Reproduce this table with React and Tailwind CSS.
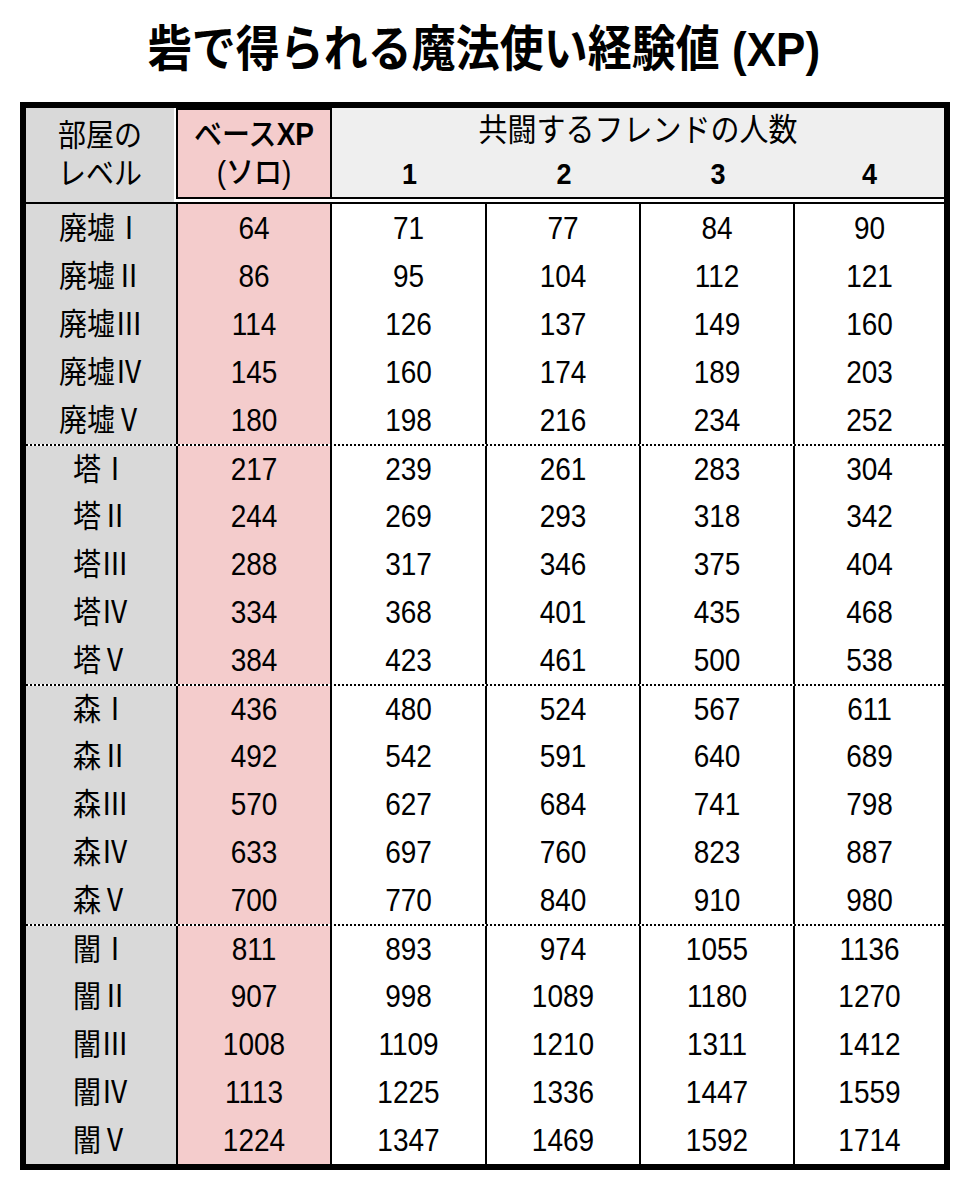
import React from 'react';

const font = "font-['Liberation_Sans','Noto_Sans_CJK_JP',sans-serif]";

const groups = [
    {
        place: '廃墟',
        rows: [
            ['Ⅰ', 64, 71, 77, 84, 90],
            ['Ⅱ', 86, 95, 104, 112, 121],
            ['Ⅲ', 114, 126, 137, 149, 160],
            ['Ⅳ', 145, 160, 174, 189, 203],
            ['Ⅴ', 180, 198, 216, 234, 252],
        ],
    },
    {
        place: '塔',
        rows: [
            ['Ⅰ', 217, 239, 261, 283, 304],
            ['Ⅱ', 244, 269, 293, 318, 342],
            ['Ⅲ', 288, 317, 346, 375, 404],
            ['Ⅳ', 334, 368, 401, 435, 468],
            ['Ⅴ', 384, 423, 461, 500, 538],
        ],
    },
    {
        place: '森',
        rows: [
            ['Ⅰ', 436, 480, 524, 567, 611],
            ['Ⅱ', 492, 542, 591, 640, 689],
            ['Ⅲ', 570, 627, 684, 741, 798],
            ['Ⅳ', 633, 697, 760, 823, 887],
            ['Ⅴ', 700, 770, 840, 910, 980],
        ],
    },
    {
        place: '闇',
        rows: [
            ['Ⅰ', 811, 893, 974, 1055, 1136],
            ['Ⅱ', 907, 998, 1089, 1180, 1270],
            ['Ⅲ', 1008, 1109, 1210, 1311, 1412],
            ['Ⅳ', 1113, 1225, 1336, 1447, 1559],
            ['Ⅴ', 1224, 1347, 1469, 1592, 1714],
        ],
    },
];

// the source image is a little taller than wide, so the glyphs get a light vertical stretch
const Tall = ({children}) => <span className="inline-block scale-y-110">{children}</span>;

const Row = ({place, row, dotted}) => {
    const [level, base, f1, f2, f3, f4] = row;
    return (
        <div className={`flex h-12 text-[28px] ${dotted ? 'border-t-2 border-dotted border-black' : ''}`}>
            <div className="w-[152px] bg-[#d9d9d9] border-r-2 border-black flex items-center justify-center pt-[2px]">
                <Tall>{place}{level}</Tall>
            </div>
            <div className="w-[154px] bg-[#f4cccc] border-r-2 border-black flex items-center justify-center pt-[2px]">
                <Tall>{base}</Tall>
            </div>
            <div className="w-[155px] border-r-2 border-black flex items-center justify-center pt-[2px]"><Tall>{f1}</Tall></div>
            <div className="w-[154px] border-r-2 border-black flex items-center justify-center pt-[2px]"><Tall>{f2}</Tall></div>
            <div className="w-[154px] border-r-2 border-black flex items-center justify-center pt-[2px]"><Tall>{f3}</Tall></div>
            <div className="flex-1 flex items-center justify-center pt-[2px]"><Tall>{f4}</Tall></div>
        </div>
    );
};

export default function App() {
    return (
        <div className={`w-[968px] h-[1190px] bg-white text-black ${font}`}>
            <div className="h-[102px] flex items-center justify-center">
                <h1 className="text-[44px] font-bold scale-y-110 pb-[2px]">砦で得られる魔法使い経験値 (XP)</h1>
            </div>

            <div className="ml-[20px] w-[930px] border-[6px] border-black">
                <div className="flex h-[96px]">
                    <div className="w-[148px] bg-[#d9d9d9] border-b-2 border-black flex flex-col items-center justify-center text-[28px] leading-[38px]">
                        <Tall>部屋の</Tall>
                        <Tall>レベル</Tall>
                    </div>
                    <div className="flex-1 flex flex-col bg-white border-b-2 border-black pl-[2px]">
                        <div className="flex flex-1 mb-[3px]">
                            <div className="w-[156px] bg-[#f4cccc] border-2 border-black flex flex-col items-center justify-center text-[28px] leading-[38px] font-medium">
                                <Tall>ベース<span className="font-semibold">XP</span></Tall>
                                <Tall>(ソロ)</Tall>
                            </div>
                            <div className="flex-1 flex flex-col bg-[#efefef] border-b-2 border-black">
                                <div className="h-[44px] flex items-end justify-center text-[29px]">
                                    <Tall>共闘するフレンドの人数</Tall>
                                </div>
                                <div className="flex-1 flex items-center text-[27px] font-bold">
                                    <div className="w-[155px] text-center"><Tall>1</Tall></div>
                                    <div className="w-[154px] text-center"><Tall>2</Tall></div>
                                    <div className="w-[154px] text-center"><Tall>3</Tall></div>
                                    <div className="flex-1 text-center"><Tall>4</Tall></div>
                                </div>
                            </div>
                        </div>
                    </div>
                </div>

                {groups.map((g, gi) =>
                    g.rows.map((r, ri) => (
                        <Row key={`${gi}-${ri}`} place={g.place} row={r} dotted={gi > 0 && ri === 0}/>
                    ))
                )}
            </div>
        </div>
    );
}
